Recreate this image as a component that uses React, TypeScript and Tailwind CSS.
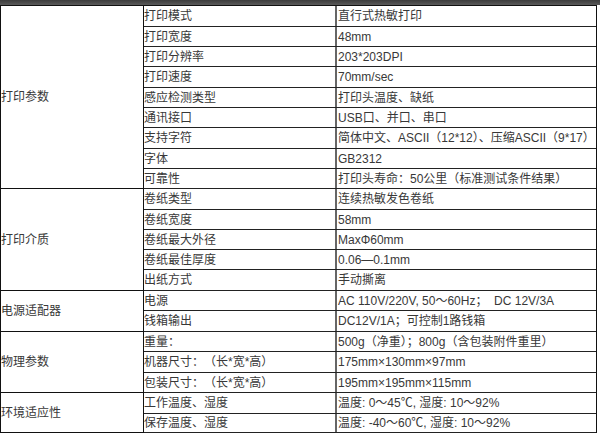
import React from "react";

type Row = { k: string; v: string; h: string };
type Group = { title: string; rows: Row[] };

const groups: Group[] = [
  {
    title: "打印参数",
    rows: [
      { k: "打印模式", v: "直行式热敏打印", h: "h-[21px]" },
      { k: "打印宽度", v: "48mm", h: "h-[20px]" },
      { k: "打印分辨率", v: "203*203DPI", h: "h-[20px]" },
      { k: "打印速度", v: "70mm/sec", h: "h-[21px]" },
      { k: "感应检测类型", v: "打印头温度、缺纸", h: "h-[20px]" },
      { k: "通讯接口", v: "USB口、并口、串口", h: "h-[20px]" },
      { k: "支持字符", v: "简体中文、ASCII（12*12）、压缩ASCII（9*17）", h: "h-[21px]" },
      { k: "字体", v: "GB2312", h: "h-[20px]" },
      { k: "可靠性", v: "打印头寿命：50公里（标准测试条件结果）", h: "h-[20px]" },
    ],
  },
  {
    title: "打印介质",
    rows: [
      { k: "卷纸类型", v: "连续热敏发色卷纸", h: "h-[21px]" },
      { k: "卷纸宽度", v: "58mm", h: "h-[20px]" },
      { k: "卷纸最大外径", v: "MaxΦ60mm", h: "h-[20px]" },
      { k: "卷纸最佳厚度", v: "0.06—0.1mm", h: "h-[20px]" },
      { k: "出纸方式", v: "手动撕离", h: "h-[21px]" },
    ],
  },
  {
    title: "电源适配器",
    rows: [
      { k: "电源", v: "AC 110V/220V, 50～60Hz；  DC 12V/3A", h: "h-[20px]" },
      { k: "钱箱输出", v: "DC12V/1A；可控制1路钱箱", h: "h-[21px]" },
    ],
  },
  {
    title: "物理参数",
    rows: [
      { k: "重量：", v: "500g（净重）；800g（含包装附件重里）", h: "h-[20px]" },
      { k: "机器尺寸：（长*宽*高）", v: "175mm×130mm×97mm", h: "h-[21px]" },
      { k: "包装尺寸：（长*宽*高）", v: "195mm×195mm×115mm", h: "h-[20px]" },
    ],
  },
  {
    title: "环境适应性",
    rows: [
      { k: "工作温度、湿度", v: "温度: 0～45℃, 湿度: 10～92%", h: "h-[21px]" },
      { k: "保存温度、湿度", v: "温度: -40～60℃, 湿度: 10～92%", h: "h-[19px]" },
    ],
  },
];

export default function App() {
  return (
    <div
      className="w-[600px] h-[434px] bg-white overflow-hidden text-[12px] leading-[14px] text-[#383838]"
      style={{ fontFamily: '"Liberation Sans", "Noto Sans CJK SC", sans-serif' }}
    >
      <div className="h-[5px] bg-gradient-to-b from-[#3c3c3c] to-[#5a5a5a]" />
      <div className="w-[597px] border-t border-l border-r border-[#111]">
        {groups.map((g) => (
          <div key={g.title} className="flex">
            <div className="w-[143px] shrink-0 border-r border-b border-[#111] flex items-center">
              <span>{g.title}</span>
            </div>
            <div className="flex-1 flex flex-col">
              {g.rows.map((r) => (
                <div key={r.k} className={`flex border-b border-[#222] ${r.h}`}>
                  <div className="w-[191px] shrink-0 flex items-center whitespace-nowrap [text-spacing-trim:space-all]">
                    {r.k}
                  </div>
                  <div className="flex-1 border-l-2 border-[#666] flex items-center pl-[1px] whitespace-pre">
                    {r.v}
                  </div>
                </div>
              ))}
            </div>
          </div>
        ))}
      </div>
    </div>
  );
}
